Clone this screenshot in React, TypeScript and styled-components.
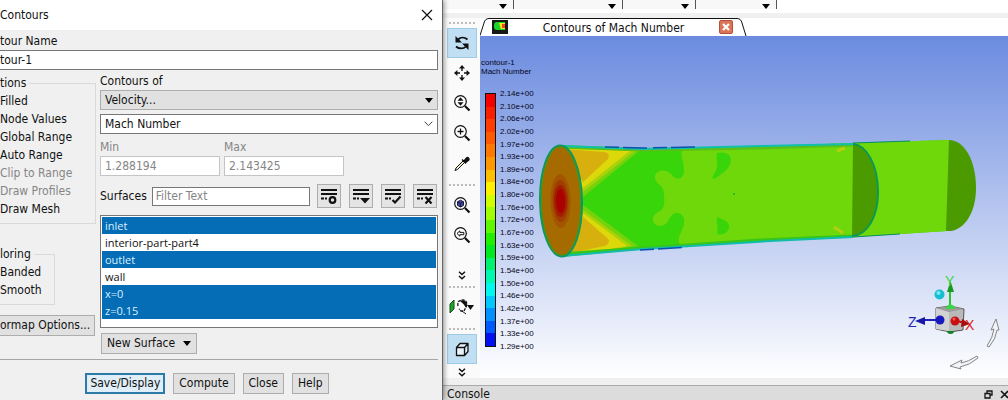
import React from "react";
import styled, { createGlobalStyle, css } from "styled-components";

const Global = createGlobalStyle`
  * { box-sizing: border-box; }
  body { margin: 0; background: #f0f0f0; overflow: hidden; }
  body, button, input, select { font: 12px/18px "DejaVu Sans Condensed", "DejaVu Sans", sans-serif; color: #111; }
`;

const Page = styled.div`
  display: flex;
  height: 100vh;
  overflow: hidden;
`;

/* ---------- Contours dialog ---------- */

const Dialog = styled.section`
  position: relative;
  z-index: 1;
  flex: 0 0 443px;
  background: #f0f0f0;
  border-right: 1px solid #666;
  box-shadow: 1px 0 5px rgba(0, 0, 0, 0.45);
  overflow: hidden;
  clip-path: inset(0 -6px 0 0);
`;
const TitleBar = styled.header`
  display: flex;
  justify-content: space-between;
  align-items: center;
  height: 30px;
  padding-right: 9px;
  background: #fff;
`;
const Title = styled.h1`
  margin: 0;
  font: inherit;
`;
const PlainButton = styled.button`
  display: flex;
  padding: 0;
  border: 0;
  background: none;
`;
const Field = styled.input`
  display: block;
  width: 100%;
  height: 20px;
  padding: 0 4px;
  border: 1px solid #777;
  background: #fff;
  &:disabled { color: #858585; border-color: #c4c4c4; }
  &::placeholder { color: #858585; opacity: 1; }
`;
const NameField = styled(Field)`
  border-left: 0;
  padding: 0;
`;
const DialogBody = styled.div`
  padding: 2px 4px 0 0;
`;
const Label = styled.label<{ $dim?: boolean }>`
  display: block;
  color: ${(p) => (p.$dim ? "#858585" : "inherit")};
`;
const Columns = styled.div`
  display: flex;
  gap: 4px;
  padding-top: 2px;
`;
const Side = styled.div`
  flex: 0 0 96px;
  padding-top: 2px;
`;
const Main = styled.div`
  flex: 1;
  min-width: 0;
`;
const Group = styled.fieldset<{ $narrow?: boolean }>`
  margin: 0 0 21px;
  padding: 0 0 5px;
  width: ${(p) => (p.$narrow ? "55px" : "96px")};
  min-width: 0;
  border: 1px solid #d9d9d9;
  border-left: 0;
  legend { padding: 0 3px 0 0; }
  ${(p) => p.$narrow && css`margin-bottom: 10px;`}
`;
const Option = styled.label<{ $dim?: boolean }>`
  display: flex;
  align-items: center;
  white-space: nowrap;
  color: ${(p) => (p.$dim ? "#858585" : "inherit")};
  input { flex: none; width: 13px; height: 13px; margin: 0 6px 0 -19px; }
`;
const Button = styled.button<{ $primary?: boolean }>`
  height: 21px;
  padding: 0 ${(p) => (p.$primary ? 3 : 5)}px;
  line-height: 17px;
  white-space: nowrap;
  background: ${(p) => (p.$primary ? "#e0eef7" : "#e1e1e1")};
  border: ${(p) => (p.$primary ? "2px solid #2b7aa8" : "1px solid #adadad")};
`;
const ColormapButton = styled(Button)`
  display: block;
  width: 95px;
  padding: 0 6px 0 0;
  border-left: 0;
  text-align: right;
`;
const SelectBox = styled.div<{ $flat?: boolean }>`
  display: flex;
  align-items: center;
  height: 20px;
  margin-bottom: 4px;
  padding-right: 4px;
  background: ${(p) => (p.$flat ? "#e1e1e1" : "#fff")};
  border: 1px solid ${(p) => (p.$flat ? "#adadad" : "#777")};
  select {
    flex: 1;
    appearance: none;
    height: 18px;
    padding: 0 4px;
    border: 0;
    background: none;
  }
`;
const Range = styled.div`
  display: flex;
  gap: 4px;
  margin-bottom: 8px;
  > div { width: 120px; }
`;
const FilterRow = styled.div`
  display: flex;
  align-items: center;
  height: 24px;
  margin-bottom: 7px;
  input { width: 158px; margin: 0 7px 0 5px; height: 19px; padding: 0 3px; }
`;
const ToolSet = styled.div`
  display: flex;
  gap: 8px;
`;
const IconButton = styled.button`
  display: flex;
  width: 24px;
  height: 24px;
  padding: 0;
  align-items: center;
  justify-content: center;
  background: #e4e4e4;
  border: 1px solid #adadad;
`;
const List = styled.ul`
  margin: 0 0 5px;
  padding: 1px;
  height: 113px;
  list-style: none;
  background: #fff;
  border: 1px solid #777;
  font: 11px/17px "Open Sans", "Noto Sans", sans-serif;
`;
const Item = styled.li<{ $on: boolean }>`
  padding: 0 3px;
  color: ${(p) => (p.$on ? "#d8f0ff" : "#111")};
  background: ${(p) => (p.$on ? "#056cb6" : "transparent")};
`;
const NewSurface = styled(Button)`
  display: flex;
  align-items: center;
  gap: 8px;
  margin-left: 1px;
`;
const Footer = styled.footer`
  display: flex;
  justify-content: center;
  gap: 8px;
  margin-top: 5px;
  padding: 13px 24px 0 0;
  border-top: 1px solid #a6a6a6;
`;

/* ---------- Graphics area ---------- */

const Workspace = styled.main`
  display: flex;
  flex: 1;
  flex-direction: column;
  min-width: 0;
  background: #f0f0f0;
`;
const TopBar = styled.div`
  display: flex;
  height: 13px;
  flex: none;
  margin-bottom: 5px;
  background: #fff;
`;
const TopCell = styled.div<{ $w: number }>`
  display: flex;
  width: ${(p) => p.$w}px;
  height: 9px;
  padding: 4px 6px 0 0;
  justify-content: flex-end;
  border-right: 1px solid #555;
  background: #f8f8f8;
  &:nth-child(4) { padding-right: 6px; }
`;
const Middle = styled.div`
  display: flex;
  flex: 1;
  min-height: 0;
`;
const ToolColumn = styled.nav`
  display: flex;
  flex: 0 0 37px;
  flex-direction: column;
  align-items: center;
  padding: 4px 3px 0 4px;
  background: #fafafa;
`;
const Tool = styled.button<{ $on?: boolean }>`
  display: flex;
  flex: none;
  width: 30px;
  height: 30px;
  padding: 0;
  align-items: center;
  justify-content: center;
  background: ${(p) => (p.$on ? "#c0dff3" : "none")};
  border: 1px solid ${(p) => (p.$on ? "#9ecbe8" : "transparent")};
`;
const More = styled(Tool)<{ $top: number }>`
  height: 16px;
  margin-top: ${(p) => p.$top}px;
`;
const Dots = styled.div`
  flex: none;
  width: 26px;
  height: 2px;
  margin: 0 0 4px;
  background: repeating-linear-gradient(90deg, #bbb 0 2px, transparent 2px 4px);
  ${Tool} + & { margin: 6px 0 4px; }
  ${More} + & { margin: 3px 0 4px; }
`;
const Stage = styled.div`
  display: flex;
  flex: 1;
  flex-direction: column;
  min-width: 0;
  background: #fff;
`;
const Tab = styled.div`
  position: relative;
  display: flex;
  flex: none;
  align-items: center;
  justify-content: space-between;
  width: 267px;
  height: 18px;
  padding: 0 14px 0 12px;
`;
const TabShape = styled.svg`
  position: absolute;
  inset: 0;
`;
const TabPart = styled.span`
  position: relative;
  display: flex;
`;
const TabTitle = styled(TabPart)`
  line-height: 18px;
  padding-top: 2px;
`;
const Viewport = styled.div`
  position: relative;
  flex: 1;
  min-height: 0;
  padding: 22px 0 0 1px;
  overflow: hidden;
  background: linear-gradient(#6b8bdf, #fff);
  font: 8px/9px "Liberation Sans", Arial, sans-serif;
  color: #060620;
`;
const Scene = styled.svg`
  position: absolute;
  inset: 0;
  width: 100%;
  height: 100%;
`;
const Legend = styled.div`
  display: flex;
  gap: 4px;
  padding: 17px 0 0 4px;
`;
const Bar = styled.div`
  display: flex;
  flex-direction: column;
  width: 11px;
  height: 254px;
  border: 1px solid #111;
`;
const Band = styled.div<{ $c: string }>`
  flex: 1;
  background: ${(p) => p.$c};
`;
const Scale = styled.div`
  display: flex;
  flex-direction: column;
  justify-content: space-between;
  height: 262px;
  margin-top: -4px;
`;
const ConsoleBar = styled.div`
  display: flex;
  flex: none;
  justify-content: space-between;
  height: 15px;
  margin-top: 7px;
  padding: 0 0 0 4px;
  line-height: 16px;
  background: #dcdcdc;
  border-top: 1px solid #a9a9a9;
`;
const WindowButtons = styled.div`
  display: flex;
  gap: 7px;
  padding-top: 4px;
`;

const Down = ({ w = 8 }: { w?: number }) => (
  <svg width={w} height={w / 2 + 1} viewBox="0 0 8 5"><path d="M0 0h8L4 5z" fill="#000" /></svg>
);

const lens = (
  <g fill="none" stroke="#111">
    <circle cx="7.5" cy="7.5" r="5.8" strokeWidth="1.2" fill="#fff" />
    <path d="M12 12l4.5 4.5" strokeWidth="2.2" />
  </g>
);
const glyphs: Record<string, React.ReactNode> = {
  rotate: (
    <g>
      <path d="M5 5.5C7.500 3 11.500 3 14.500 5.500M13 12.500c-2.500 2.600-7 2.600-10 0" fill="none" stroke="#111" strokeWidth="1.8" />
      <path d="M2.500 2v6.500H9zM15.500 16V9.500H9z" fill="#111" />
    </g>
  ),
  move: (
    <path d="M9 1l3 3.4H9.7V7H8.3V4.4H6zM9 17l3-3.4H9.7V11H8.3v2.6H6zM1 9l3.4-3v2.3H7v1.4H4.4V12zM17 9l-3.4-3v2.3H11v1.4h2.6V12z" fill="#111" />
  ),
  zoom: <g>{lens}<path d="M7.5 3.2l3 3.6h-6zM7.5 11.8l3-3.6h-6z" fill="#111" /></g>,
  zoomIn: <g>{lens}<path d="M4.5 7.5h6M7.5 4.5v6" stroke="#111" strokeWidth="1.3" /></g>,
  pick: (
    <g>
      <path d="M2 16.500l1-2.500 7-7 1.500 1.500-7 7z" fill="#f4f0c8" stroke="#111" />
      <path d="M9 5.500l4 4M11 7l2.500-3c1-1.500 3.500.5 2.300 2l-3 2.500z" fill="#111" stroke="#111" strokeWidth="1.300" />
    </g>
  ),
  fit: <g>{lens}<path d="M4.5 5.8l3-1.6 3 1.6v3.6l-3 1.6-3-1.6z" fill="#4548a8" stroke="#191940" /><path d="M4.5 5.8l3 1.4 3-1.4M7.5 7.2V11" fill="none" stroke="#191940" /></g>,
  back: <g>{lens}<path d="M4 7.5l2.8-2.6v1.5h4v2.3h-4v1.5z" fill="#fff" stroke="#111" /></g>,
  cube: <path d="M3.5 7.5h8v8h-8zM3.5 7.5l3.500-4h8l-3.500 4M15 3.500v8l-3.500 4" fill="#e8f2f8" stroke="#111" strokeWidth="1.3" strokeLinejoin="round" />,
};
const Glyph = ({ name }: { name: string }) => (
  <svg width="18" height="18" viewBox="0 0 18 18">{glyphs[name]}</svg>
);
const Chevrons = () => (
  <svg width="8" height="9" viewBox="0 0 8 9"><path d="M1 .8l3 2.7L7 .8M1 5l3 2.7L7 5" fill="none" stroke="#111" strokeWidth="1.5" /></svg>
);
const Probe = () => (
  <svg width="26" height="18" viewBox="0 0 26 18">
    <path d="M1 6l4-4v9l-4 4z" fill="#20a52b" stroke="#174a1a" />
    <path d="M9 8c-1-5 2-6 5-6s5 3 3 7l-2 4h-3l-2-2" fill="#fff" stroke="#111" strokeWidth="1.3" strokeDasharray="3 1" />
    <path d="M11.500 3h4l2 2.500-.5 3.500-2-3zM13 13l4 3" fill="#111" stroke="#111" />
    <path d="M18 7h7l-3.5 5z" fill="#111" />
  </svg>
);

const marks: [string, React.ReactNode][] = [
  ["List settings", <circle key="m" cx="12.5" cy="13" r="2.800" fill="none" stroke="#111" strokeWidth="2.200" />],
  ["List menu", <path key="m" d="M8 11h10l-5 5.500z" fill="#111" />],
  ["Select all", <path key="m" d="M8.5 13l2.500 2.500 5.500-6" fill="none" stroke="#111" strokeWidth="2.200" />],
  ["Deselect all", <path key="m" d="M9.500 10l6 6.500M15.500 10l-6 6.500" stroke="#111" strokeWidth="2.200" />],
];

const options = [
  ["Filled"], ["Node Values"], ["Global Range"], ["Auto Range"], ["Clip to Range", "dim"], ["Draw Profiles", "dim"], ["Draw Mesh"],
];
const surfaces: [string, boolean][] = [
  ["inlet", true], ["interior-part-part4", false], ["outlet", true], ["wall", false], ["x=0", true], ["z=0.15", true],
];
const levels = ["2.14", "2.10", "2.06", "2.02", "1.97", "1.93", "1.89", "1.84", "1.80", "1.76", "1.72", "1.67", "1.63", "1.59", "1.54", "1.50", "1.46", "1.42", "1.37", "1.33", "1.29"];
const bands = ["#f40000", "#fa1e00", "#ff3c00", "#ff5a00", "#ff7800", "#ff9800", "#ffc000", "#fff000", "#d0ff00", "#a0ff00", "#60f800", "#20f000", "#00e820", "#00f070", "#00f8b0", "#00f8f0", "#00c8ff", "#0090ff", "#0058ff", "#0010f0"];

const NozzleScene = () => (
  <Scene viewBox="480 36 528 342" preserveAspectRatio="xMinYMin meet">
    {/* nozzle body */}
    <path d="M560 145L643 148L760 146L853 143L949 140L947 231L853 237L770 241L643 249L562 257L583 201Z" fill="#38d50a" />
    <path d="M682 150C680 158 684 160 684 170C684 181 675 180 672 175C665 167 654 171 655 178C657 186 664 184 664 195C665 207 663 210 658 212C650 216 652 226 660 226C670 226 668 213 677 213C686 214 685 224 682 230C678 238 678 240 680 246L853 237L947 231L949 140L853 143Z" fill="#6ed80a" />
    <path d="M717 153C715 162 721 164 713 176C711 181 717 178 720 175C728 170 733 163 730 156C727 152 720 152 717 153ZM717 217C716 224 719 228 717 234C724 236 730 231 729 225C727 220 721 219 717 217Z" fill="#38d50a" />
    <circle cx="734" cy="194" r="1" fill="#25b21b" />
    {/* inlet expansion fans */}
    <path d="M563 148L639 151L583 197ZM583 205L638 246L570 256Z" fill="#76d20a" />
    <path d="M563 148L635 151L583 192ZM583 210L632 246L570 256Z" fill="#a8d20a" />
    <path d="M563 148L630 151L583 188ZM583 213L627 246L570 256Z" fill="#dcd80a" />
    <path d="M563 149L604 152Q611 153 608 159L583 182ZM583 217L607 238Q612 242 605 246L570 253Z" fill="#d8b00e" />
    {/* wall boundary layers */}
    <g fill="none">
      <path d="M560 147L643 150L760 148L853 145" stroke="#5bbf18" strokeWidth="3" />
      <path d="M560 254L643 248L760 240L853 236" stroke="#38c51a" strokeWidth="3" />
      <path d="M560 146L643 149L760 146L853 144" stroke="#10c0ad" strokeWidth="2" />
      <path d="M562 256L643 249L770 241L853 237" stroke="#12bcaa" strokeWidth="2" />
      <path d="M605 147L643 148L700 147M640 250L688 247" stroke="#0c52ad" strokeWidth="1.5" strokeDasharray="14 4 24 6" />
      <path d="M853 143L910 141M853 237L900 234" stroke="#0a8d68" />
      <path d="M837 151l8-3M834 227l9 6" stroke="#b4cf12" strokeWidth="3" />
    </g>
    {/* inlet disc */}
    <g transform="rotate(-1 561 201)">
      <ellipse cx="561" cy="201" rx="21" ry="55.5" fill="#a56a00" stroke="#0b9865" strokeWidth="2" />
      <ellipse cx="561" cy="201" rx="19.5" ry="54" fill="none" stroke="#4f9808" />
      <ellipse cx="560.5" cy="201" rx="10" ry="27" fill="#a45500" />
      <ellipse cx="560.5" cy="201" rx="8" ry="21" fill="#a13d00" />
      <ellipse cx="560.5" cy="201" rx="6.5" ry="16" fill="#a21e00" />
      <ellipse cx="560.5" cy="201" rx="4.5" ry="12" fill="#aa0000" />
    </g>
    {/* section and outlet caps */}
    <path d="M853 143C866 145 878 164 878 192C878 216 868 235 852 237Z" fill="#4b9b00" />
    <path d="M853 144C866 145 878 164 878 192C878 216 868 235 852 236" fill="none" stroke="#0b9a55" strokeWidth="2" />
    <path d="M949 140C964 140 976 160 976 188C976 212 965 229 951 231H946Z" fill="#4b9b00" />

    {/* orientation triad */}
    <path d="M936 308l14-2 14 3-1 21-13 2-14-3z" fill="#b9b9b9" stroke="#555" />
    <path d="M936 308l13 4v19l-13-2z" fill="#d2d2d2" />
    <path d="M936 308l14-2 14 3-15 3z" fill="#9b9b9b" />
    <path d="M947 331a3.5 3 0 0 0 7 0z" fill="#128024" />
    <path d="M950 306V286" stroke="#27c535" strokeWidth="2" />
    <path d="M950.500 281l3.500 11h-7z" fill="#179a24" />
    <path d="M946 309a4.500 4.500 0 0 1 9 0z" fill="#35d842" />
    <circle cx="939.500" cy="294.500" r="5" fill="#16bed0" />
    <circle cx="938.500" cy="293" r="2" fill="#76edf5" />
    <path d="M938 320H922" stroke="#2020b8" strokeWidth="2" />
    <path d="M915 321l10-4v8z" fill="#1818a6" />
    <circle cx="940" cy="320" r="4.500" fill="#1919c0" />
    <path d="M957 321l8 2" stroke="#c81212" strokeWidth="2" />
    <path d="M970 324l-9 3 1-8z" fill="#a60d0d" />
    <circle cx="955" cy="321" r="4.500" fill="#c90e12" />
    <circle cx="954" cy="319" r="1.500" fill="#ff5555" />
    <g fontFamily="Liberation Sans, sans-serif" fontSize="14">
      <text x="945" y="286" fill="#35d842">Y</text>
      <text x="908" y="327" fill="#2323c0">Z</text>
      <text x="965" y="330" fill="#dc2020">X</text>
    </g>
    {/* roll arrows */}
    <path d="M987 346Q993 337 994 329L991 330L996 319L999 330L997 330Q996 339 989 347ZM977 356Q968 362 961 363L962 360L950 366L961 369L960 367Q970 365 978 358Z" fill="#f2f4fb" stroke="#858585" />
  </Scene>
);

export default function App() {
  return (
    <Page>
      <Global />
      <Dialog aria-label="Contours">
        <TitleBar>
          <Title>Contours</Title>
          <PlainButton aria-label="Close dialog">
            <svg width="12" height="12" viewBox="0 0 12 12"><path d="M1 1l10 10M11 1L1 11" stroke="#111" strokeWidth="1.2" /></svg>
          </PlainButton>
        </TitleBar>
        <DialogBody>
          <Label htmlFor="name">tour Name</Label>
          <NameField id="name" defaultValue="tour-1" />
          <Columns>
            <Side>
              <Group>
                <legend>tions</legend>
                {options.map(([text, dim]) => (
                  <Option key={text} $dim={!!dim}>
                    <input type="checkbox" disabled={!!dim} />
                    {text}
                  </Option>
                ))}
              </Group>
              <Group $narrow>
                <legend>loring</legend>
                {["Banded", "Smooth"].map((text) => (
                  <Option key={text}>
                    <input type="radio" name="coloring" defaultChecked={text === "Banded"} />
                    {text}
                  </Option>
                ))}
              </Group>
              <ColormapButton>ormap Options...</ColormapButton>
            </Side>
            <Main>
              <Label htmlFor="field">Contours of</Label>
              <SelectBox $flat>
                <select id="field"><option>Velocity...</option></select>
                <Down />
              </SelectBox>
              <SelectBox>
                <select aria-label="Variable"><option>Mach Number</option></select>
                <svg width="9" height="6" viewBox="0 0 9 6"><path d="M.7.7l3.800 4 3.800-4" fill="none" stroke="#444" /></svg>
              </SelectBox>
              <Range>
                <div>
                  <Label htmlFor="min" $dim>Min</Label>
                  <Field id="min" disabled defaultValue="1.288194" />
                </div>
                <div>
                  <Label htmlFor="max" $dim>Max</Label>
                  <Field id="max" disabled defaultValue="2.143425" />
                </div>
              </Range>
              <FilterRow>
                <Label htmlFor="filter">Surfaces</Label>
                <Field id="filter" placeholder="Filter Text" />
                <ToolSet>
                  {marks.map(([name, mark]) => (
                    <IconButton key={name} aria-label={name}>
                      <svg width="18" height="18" viewBox="0 0 18 18">
                        <path d="M1 3h16M1 7h16M1 11.500h3M5 11.500h2" stroke="#111" strokeWidth="1.800" />
                        {mark}
                      </svg>
                    </IconButton>
                  ))}
                </ToolSet>
              </FilterRow>
              <List role="listbox" aria-label="Surfaces" aria-multiselectable>
                {surfaces.map(([text, on]) => (
                  <Item key={text} role="option" aria-selected={on} $on={on}>{text}</Item>
                ))}
              </List>
              <NewSurface>New Surface <Down /></NewSurface>
            </Main>
          </Columns>
          <Footer>
            <Button $primary>Save/Display</Button>
            <Button>Compute</Button>
            <Button>Close</Button>
            <Button>Help</Button>
          </Footer>
        </DialogBody>
      </Dialog>

      <Workspace>
        <TopBar>
          {[71, 109, 73, 81].map((w) => (
            <TopCell key={w} $w={w}>
              <PlainButton aria-label="Open menu"><Down /></PlainButton>
            </TopCell>
          ))}
        </TopBar>
        <Middle>
          <ToolColumn aria-label="View tools">
            <Dots />
            <Tool $on aria-label="Rotate"><Glyph name="rotate" /></Tool>
            <Tool aria-label="Pan"><Glyph name="move" /></Tool>
            <Tool aria-label="Zoom"><Glyph name="zoom" /></Tool>
            <Tool aria-label="Zoom in"><Glyph name="zoomIn" /></Tool>
            <Tool aria-label="Probe"><Glyph name="pick" /></Tool>
            <Dots />
            <Tool aria-label="Fit to window"><Glyph name="fit" /></Tool>
            <Tool aria-label="Previous view"><Glyph name="back" /></Tool>
            <More $top={17} aria-label="More view tools"><Chevrons /></More>
            <Dots />
            <Tool aria-label="Display options"><Probe /></Tool>
            <Dots />
            <Tool $on aria-label="Perspective"><Glyph name="cube" /></Tool>
            <More $top={0} aria-label="More display tools"><Chevrons /></More>
          </ToolColumn>
          <Stage>
            <Tab>
              <TabShape width="267" height="18" viewBox="0 0 267 18">
                <path d="M0 17.500L4 5Q5 .5 9 .5H257Q261 .5 262 5L266 18" fill="#fff" stroke="#111" />
              </TabShape>
              <TabPart>
                <svg width="16" height="14" viewBox="0 0 16 14">
                  <path d="M0 0h16v14H0z" fill="#151a15" />
                  <path d="M2 5q0-3 3-3h8v8H5Q2 10 2 7z" fill="#18d52a" />
                  <path d="M7 3h6v6H9z" fill="#ffe41a" />
                  <path d="M10 4h3v4h-3z" fill="#f04a1a" />
                </svg>
              </TabPart>
              <TabTitle>Contours of Mach Number</TabTitle>
              <TabPart>
                <PlainButton aria-label="Close tab">
                  <svg width="14" height="14" viewBox="0 0 14 14">
                    <rect x=".5" y=".5" width="13" height="13" rx="1.500" fill="#dc7458" stroke="#b0523b" />
                    <path d="M4 4l6 6M10 4l-6 6" stroke="#fff" strokeWidth="2.200" />
                  </svg>
                </PlainButton>
              </TabPart>
            </Tab>
            <Viewport>
              <NozzleScene />
              <div>contour-1</div>
              <div>Mach Number</div>
              <Legend>
                <Bar>{bands.map((c) => <Band key={c} $c={c} />)}</Bar>
                <Scale>{levels.map((v) => <span key={v}>{v}e+00</span>)}</Scale>
              </Legend>
            </Viewport>
          </Stage>
        </Middle>
        <ConsoleBar>
          <span>Console</span>
          <WindowButtons>
            <PlainButton aria-label="Restore console">
              <svg width="9" height="9" viewBox="0 0 9 9"><path d="M3 3V1h5v4H6M1 3.500h5V8H1z" fill="none" stroke="#111" strokeWidth="1.300" /></svg>
            </PlainButton>
            <PlainButton aria-label="Close console">
              <svg width="8" height="9" viewBox="0 0 8 9"><path d="M1 1l7 7M8 1L1 8" stroke="#111" strokeWidth="1.600" /></svg>
            </PlainButton>
          </WindowButtons>
        </ConsoleBar>
      </Workspace>
    </Page>
  );
}
